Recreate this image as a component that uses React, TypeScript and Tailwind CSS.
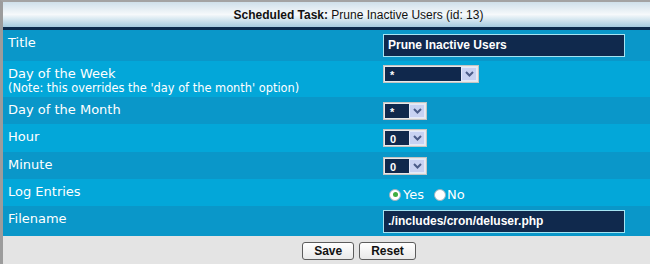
const label = "font-['DejaVu_Sans',Verdana,sans-serif] text-[13px] leading-[15px] text-white";
const tahoma = "font-['Liberation_Sans',Tahoma,Arial,sans-serif]";

function Chevron() {
  return (
    <svg width="9" height="6" viewBox="0 0 9 6">
      <path d="M1 1 L4.5 4.5 L8 1" fill="none" stroke="#4b5c88" strokeWidth="2" />
    </svg>
  );
}

function Select({ value, width }: { value: string; width: string }) {
  return (
    <div className={`${width} h-[18px] flex border border-[#c4c4c4] bg-[#e8e8e8] p-px`}>
      <div className={`flex-1 bg-[#10284c] text-white ${tahoma} text-[11px] font-bold leading-[16px] pl-[5px]`}>
        {value}
      </div>
      <div className="w-[16px] bg-[#c8d2f2] border border-[#e4e9fb] flex items-center justify-center">
        <Chevron />
      </div>
    </div>
  );
}

function TextInput({ value }: { value: string }) {
  return (
    <div
      className={`w-[242px] h-[23px] border border-[#a5e4f2] bg-[#10294d] text-white ${tahoma} text-[12px] font-bold leading-[21px] pl-[4px]`}
    >
      {value}
    </div>
  );
}

function Radio({ checked }: { checked?: boolean }) {
  return (
    <div className="w-[12px] h-[12px] rounded-full bg-white border border-[#9fb3bd] flex items-center justify-center">
      {checked && <div className="w-[5px] h-[5px] rounded-full bg-[#3fae3f]" />}
    </div>
  );
}

type Row = { label: React.ReactNode; field: React.ReactNode; h: string; dark: boolean; pt?: string };

export default function App() {
  const rows: Row[] = [
    { label: "Title", field: <TextInput value="Prune Inactive Users" />, h: "h-[31px]", dark: true, pt: "pt-[4px]" },
    {
      label: (
        <>
          <div>Day of the Week</div>
          <div className="text-[11.4px] leading-[14px]">(Note: this overrides the 'day of the month' option)</div>
        </>
      ),
      field: <Select value="*" width="w-[96px]" />,
      h: "h-[36px]",
      dark: false,
      pt: "pt-[4px]",
    },
    { label: "Day of the Month", field: <Select value="*" width="w-[44px]" />, h: "h-[27px]", dark: true },
    { label: "Hour", field: <Select value="0" width="w-[44px]" />, h: "h-[28px]", dark: false },
    { label: "Minute", field: <Select value="0" width="w-[44px]" />, h: "h-[27px]", dark: true },
    {
      label: "Log Entries",
      field: (
        <div className={`flex items-center pl-[6px] pt-[3px] ${label}`}>
          <Radio checked />
          <span className="ml-[2px] mr-[10px]">Yes</span>
          <Radio />
          <span className="ml-[1px]">No</span>
        </div>
      ),
      h: "h-[27px]",
      dark: false,
    },
    { label: "Filename", field: <TextInput value="./includes/cron/deluser.php" />, h: "h-[30px]", dark: true, pt: "pt-[4px]" },
  ];

  return (
    <div className="w-[650px] h-[264px] bg-[#e4e4e4] border-l-[3px] border-l-[#9c9c9c] border-t-2 border-t-[#a3a3a3] overflow-hidden">
      {/* header */}
      <div className="h-[28px] bg-gradient-to-b from-[#cfe0ea] via-[#f6f9fb] to-[#a4cbdf] border-b-[3px] border-b-[#0c2b4d] flex items-center justify-center pl-[64px]">
        <span className={`${tahoma} text-[12px] text-[#111]`}>
          <b>Scheduled Task:</b> Prune Inactive Users (id: 13)
        </span>
      </div>

      {rows.map((r, i) => (
        <div key={i} className={`flex ${r.h} ${r.dark ? "bg-[#0a97c9]" : "bg-[#03a7d9]"}`}>
          <div className={`w-[380px] pl-[5px] pt-[5px] ${label}`}>{r.label}</div>
          <div className={`flex-1 ${r.pt ?? "pt-[5px]"}`}>{r.field}</div>
        </div>
      ))}

      {/* footer */}
      <div className="h-[28px] flex items-center justify-center gap-[5px] pl-[65px] pt-px">
        {["Save", "Reset"].map((b) => (
          <button
            key={b}
            className={`h-[18px] px-[11px] rounded-[3px] border border-[#5c5c5c] bg-gradient-to-b from-white to-[#e9e9e9] ${tahoma} text-[12px] font-bold leading-[16px] text-[#111]`}
          >
            {b}
          </button>
        ))}
      </div>
    </div>
  );
}
